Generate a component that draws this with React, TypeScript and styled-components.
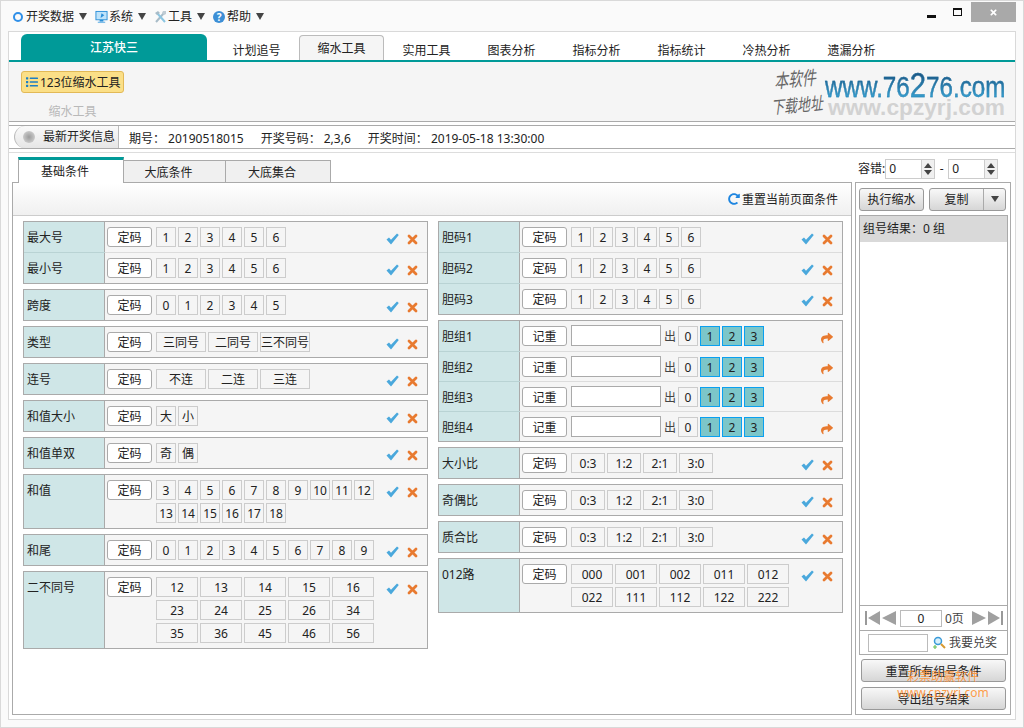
import React from 'react';
import styled, { createGlobalStyle } from 'styled-components';
import { FaTimes, FaShare, FaList, FaRedoAlt } from 'react-icons/fa';

const GlobalStyle = createGlobalStyle`
    html, body {
        margin: 0;
        padding: 0;
        background: #fff;
    }
    * {
        box-sizing: border-box;
    }
    body {
        font-family: "Noto Sans", "Noto Sans CJK SC", "Liberation Sans", sans-serif;
        font-size: 12px;
        color: #222;
    }
`;

const Window = styled.div`
    position: relative;
    width: 1024px;
    height: 728px;
    display: flex;
    flex-direction: column;
    background: #fafafa;
    border: 1px solid #d9d9d9;
    overflow: hidden;
`;

const TitleBar = styled.div`
    height: 30px;
    flex: none;
    display: flex;
    align-items: flex-start;
    justify-content: space-between;
`;

const Menu = styled.div`
    display: flex;
    align-items: center;
    height: 30px;
    padding: 1px 0 0 12px;
    gap: 8px;
`;

const MenuItem = styled.div`
    display: flex;
    align-items: center;
    gap: 1px;
    line-height: 16px;
    color: #222;
`;

const MenuArrow = styled.span`
    width: 0;
    height: 0;
    margin-left: 4px;
    border-left: 4px solid transparent;
    border-right: 4px solid transparent;
    border-top: 7px solid #444;
`;

const Ring = styled.span`
    width: 10px;
    height: 10px;
    margin-right: 2px;
    border-radius: 50%;
    border: 2px solid #2f8fe8;
`;

const HelpBadge = styled.span`
    width: 12px;
    height: 12px;
    margin-right: 1px;
    border-radius: 50%;
    background: #3d8fd6;
    color: #fff;
    font-size: 10px;
    line-height: 12px;
    font-weight: 700;
    text-align: center;
`;

const WindowControls = styled.div`
    display: flex;
    align-items: flex-start;
    padding-right: 7px;
`;

const MinButton = styled.span`
    width: 9px;
    height: 3px;
    margin: 14px 17px 0 0;
    background: #111;
`;

const MaxButton = styled.span`
    width: 9px;
    height: 8px;
    margin: 7px 9px 0 0;
    border: 1px solid #111;
    border-top-width: 2px;
`;

const CloseButton = styled.span`
    width: 45px;
    height: 20px;
    margin-top: 1px;
    background: #a9a9a9;
    display: flex;
    align-items: center;
    justify-content: center;
    color: #fff;
    font-size: 9px;
`;

const Shell = styled.div`
    flex: 1;
    margin: 0 7px 7px 7px;
    background: #fff;
    border: 1px solid #d9d9d9;
    display: flex;
    flex-direction: column;
    min-height: 0;
`;

const TabStrip = styled.div`
    height: 30px;
    flex: none;
    display: flex;
    align-items: flex-end;
    padding-left: 12px;
    border-bottom: 2px solid #009a98;
`;

const BrandTab = styled.div`
    width: 186px;
    height: 26px;
    margin-right: 7px;
    background: #009a98;
    border-radius: 6px 6px 0 0;
    color: #fff;
    font-weight: 500;
    text-align: center;
    line-height: 28px;
`;

const NavTab = styled.div<{ $active?: boolean }>`
    width: 85px;
    height: 25px;
    text-align: center;
    line-height: ${(p) => (p.$active ? '25px' : '29px')};
    background: ${(p) => (p.$active ? '#f5f5f5' : 'transparent')};
    border: ${(p) => (p.$active ? '1px solid #bbb' : '1px solid transparent')};
    border-bottom: 0;
    border-radius: 4px 4px 0 0;
`;

const Ribbon = styled.div`
    height: 60px;
    flex: none;
    display: flex;
    justify-content: space-between;
    padding: 9px 8px 0 12px;
    background: #f5f5f5;
    border-bottom: 1px solid #aaa;
`;

const RibbonGroup = styled.div`
    width: 103px;
    display: flex;
    flex-direction: column;
    align-items: center;
`;

const RibbonButton = styled.div`
    width: 103px;
    height: 23px;
    display: flex;
    align-items: center;
    gap: 2px;
    padding-left: 4px;
    background: #fbdf87;
    border: 1px solid #e2b957;
    border-radius: 3px;
    white-space: nowrap;
    svg {
        color: #1f7fc4;
    }
`;

const RibbonCaption = styled.div`
    margin-top: 10px;
    color: #b9b9b9;
    line-height: 18px;
`;

const Logo = styled.div`
    display: flex;
    align-items: flex-start;
    margin-top: -6px;
`;

const HandNote = styled.div`
    width: 54px;
    display: flex;
    flex-direction: column;
    color: #666;
    font-size: 14px;
    line-height: 27px;
    font-style: italic;
    white-space: nowrap;
    span {
        display: block;
        transform: scaleY(1.35) rotate(-4deg);
    }
    span:first-child {
        padding-left: 3px;
    }
    span:last-child {
        font-size: 13px;
    }
`;

const LogoText = styled.div`
    width: 182px;
    padding-top: 6px;
    font-family: "Liberation Sans", sans-serif;
    white-space: nowrap;
`;

const LogoMain = styled.div`
    width: 217px;
    font-size: 29px;
    line-height: 27px;
    transform: scaleX(0.835);
    transform-origin: left top;
    background: linear-gradient(#174f7c, #3aa9da);
    -webkit-background-clip: text;
    background-clip: text;
    color: transparent;
    -webkit-text-stroke: 0.3px rgba(30, 110, 160, 0.7);
    b {
        font-size: 35px;
        font-weight: 400;
    }
`;

const LogoSub = styled.div`
    margin: -3px 0 0 3px;
    font-size: 22.7px;
    line-height: 18px;
    font-weight: 700;
    color: #d2d2d2;
`;

const InfoBar = styled.div`
    height: 24px;
    flex: none;
    margin-top: 3px;
    display: flex;
    align-items: center;
    padding-left: 5px;
    border-top: 1px solid #aaa;
    border-bottom: 1px solid #aaa;
`;

const InfoLabel = styled.div`
    width: 105px;
    height: 22px;
    margin-right: 10px;
    display: flex;
    align-items: center;
    padding-left: 8px;
    gap: 8px;
    line-height: 24px;
    background: linear-gradient(#fafafa, #e6e6e6);
    border: 1px solid #bbb;
    border-width: 0 1px 0 1px;
    border-radius: 11px 0 0 11px;
    white-space: nowrap;
`;

const InfoDot = styled.span`
    width: 12px;
    height: 12px;
    flex: none;
    border-radius: 50%;
    background: radial-gradient(#9c9c9c, #c9c9c9 70%, #e8e8e8);
`;

const InfoValue = styled.span`
    margin-right: 17px;
    padding-top: 1px;
    white-space: pre;
`;

const Workspace = styled.div`
    flex: 1;
    margin-top: 3px;
    padding: 0 3px 4px 3px;
    border-top: 1px solid #ddd;
    display: flex;
    flex-direction: column;
    min-height: 0;
`;

const SubBar = styled.div`
    height: 29px;
    flex: none;
    display: flex;
    align-items: flex-end;
    padding-left: 6px;
    justify-content: space-between;
`;

const SubTabs = styled.div`
    display: flex;
    align-items: flex-end;
    position: relative;
    z-index: 1;
    margin-bottom: -1px;
`;

const SubTab = styled.div<{ $active?: boolean; $w: number }>`
    width: ${(p) => p.$w}px;
    height: ${(p) => (p.$active ? 26 : 23)}px;
    padding-right: 12px;
    text-align: center;
    line-height: 23px;
    background: ${(p) => (p.$active ? '#fff' : '#f0f0f0')};
    border: 1px solid #aaa;
    border-left-width: ${(p) => (p.$active ? 1 : 0)}px;
    border-top: ${(p) => (p.$active ? '3px solid #009a98' : '1px solid #aaa')};
    border-bottom: ${(p) => (p.$active ? '0' : '1px solid #aaa')};
`;

const Tolerance = styled.div`
    width: 156px;
    height: 22px;
    margin-bottom: 2px;
    display: flex;
    align-items: center;
    padding-left: 2px;
    line-height: 24px;
    white-space: nowrap;
`;

const Spinner = styled.div`
    width: 50px;
    height: 20px;
    display: flex;
    justify-content: space-between;
    padding-left: 3px;
    line-height: 18px;
    border: 1px solid #ccc;
    background: #fff;
`;

const SpinnerArrows = styled.div`
    width: 13px;
    height: 18px;
    display: flex;
    flex-direction: column;
    align-items: center;
    justify-content: space-around;
    padding: 2px 0;
    background: #f0f0f0;
    border-left: 1px solid #ccc;
`;

const SpinUp = styled.span`
    border-left: 4px solid transparent;
    border-right: 4px solid transparent;
    border-bottom: 5px solid #444;
`;

const SpinDown = styled.span`
    border-left: 4px solid transparent;
    border-right: 4px solid transparent;
    border-top: 5px solid #444;
`;

const SpinDash = styled.span`
    width: 13px;
    text-align: center;
`;

const Panels = styled.div`
    flex: 1;
    display: flex;
    gap: 3px;
    min-height: 0;
`;

const LeftPanel = styled.div`
    width: 840px;
    display: flex;
    flex-direction: column;
    border: 1px solid #aaa;
`;

const PanelToolbar = styled.div`
    height: 33px;
    flex: none;
    display: flex;
    align-items: center;
    justify-content: flex-end;
    gap: 2px;
    padding-right: 13px;
    background: linear-gradient(#fff, #f0f0f0);
    border-bottom: 1px solid #ccc;
    svg {
        color: #1f86e0;
    }
`;

const Columns = styled.div`
    display: flex;
    gap: 10px;
    padding: 5px 0 0 10px;
`;

const Column = styled.div`
    width: 405px;
    display: flex;
    flex-direction: column;
    gap: 5px;
`;

const Group = styled.div`
    border: 1px solid #aaa;
    background: #f5f5f5;
`;

const Row = styled.div`
    display: flex;
    & + & {
        border-top: 1px solid #dcdcdc;
    }
`;

const Label = styled.div`
    width: 81px;
    flex: none;
    padding: 2px 0 0 3px;
    line-height: 27px;
    background: #cfe6e7;
    border-right: 1px solid #aaa;
    ${Row} + ${Row} & {
        box-shadow: 0 -1px 0 #b9d3d4;
    }
`;

const RowBody = styled.div`
    flex: 1;
    display: flex;
    align-items: flex-start;
    gap: 4px;
    padding: 5px 0 5px 2px;
`;

const DanBody = styled(RowBody)`
    height: 29px;
    padding: 5px 0 0 2px;
    gap: 3px;
    ${Row}:first-child & {
        height: 30px;
    }
`;

const CodeButton = styled.div`
    width: 45px;
    height: 20px;
    flex: none;
    text-align: center;
    line-height: 20px;
    background: #fff;
    border: 1px solid #aaa;
    border-radius: 3px;
`;

const ChipGrid = styled.div<{ $cols: number; $w: number }>`
    display: grid;
    grid-template-columns: repeat(${(p) => p.$cols}, ${(p) => p.$w}px);
    gap: 3px 2px;
`;

const Chip = styled.div<{ $on?: boolean }>`
    height: 20px;
    text-align: center;
    line-height: 19px;
    white-space: nowrap;
    background: ${(p) => (p.$on ? '#7cc6c9' : '#f5f5f5')};
    border: 1px solid ${(p) => (p.$on ? '#0aa0f0' : '#ccc')};
`;

const Actions = styled.div`
    margin-left: auto;
    width: 41px;
    height: 20px;
    flex: none;
    display: flex;
    align-items: center;
    gap: 8px;
    padding-top: 4px;
`;

const ShareIcon = styled(FaShare)`
    width: 12px;
    height: 12px;
    margin-left: 20px;
    color: #e87a30;
`;

const DanInput = styled.div`
    width: 90px;
    height: 21px;
    flex: none;
    margin: -1px 0 0 1px;
    background: #fff;
    border: 1px solid #aaa;
`;

const DanGroup = styled.div`
    display: flex;
    gap: 2px;
`;

const DanChip = styled(Chip)`
    width: 20px;
`;

const DanOut = styled.span`
    color: #444;
    width: 11px;
    line-height: 21px;
    white-space: nowrap;
`;

const RightPanel = styled.div`
    width: 156px;
    display: flex;
    flex-direction: column;
    border: 1px solid #aaa;
    padding: 0 3px;
`;

const RunBar = styled.div`
    height: 32px;
    flex: none;
    display: flex;
    align-items: center;
    gap: 5px;
`;

const GrayButton = styled.div<{ $w: number }>`
    width: ${(p) => p.$w}px;
    height: 23px;
    flex: none;
    display: flex;
    align-items: center;
    justify-content: center;
    background: linear-gradient(#f8f8f8, #d6d6d6);
    border: 1px solid #999;
    border-radius: 3px;
`;

const SplitButton = styled(GrayButton)`
    justify-content: flex-start;
`;

const SplitText = styled.span`
    flex: 1;
    text-align: center;
`;

const SplitArrow = styled.span`
    width: 22px;
    height: 21px;
    display: flex;
    align-items: center;
    justify-content: center;
    border-left: 1px solid #aaa;
    &::after {
        content: "";
        border-left: 4px solid transparent;
        border-right: 4px solid transparent;
        border-top: 6px solid #444;
    }
`;

const ResultBox = styled.div`
    width: 149px;
    flex: 1;
    display: flex;
    flex-direction: column;
    border: 1px solid #aaa;
    border-bottom: 0;
    background: #fff;
    min-height: 0;
`;

const ResultHead = styled.div`
    height: 26px;
    flex: none;
    padding-left: 3px;
    line-height: 25px;
    background: #d9d9d9;
`;

const ResultList = styled.div`
    flex: 1;
`;

const Pager = styled.div`
    height: 25px;
    flex: none;
    display: flex;
    align-items: center;
    gap: 2px;
    padding-left: 5px;
    border-top: 1px solid #aaa;
    svg {
        flex: none;
    }
`;

const PagerInput = styled.div`
    width: 42px;
    height: 17px;
    margin-left: 2px;
    text-align: center;
    line-height: 15px;
    border: 1px solid #bbb;
    background: #fff;
`;

const PagerLabel = styled.span`
    width: 25px;
    margin-left: 1px;
    color: #444;
`;

const PrizeRow = styled.div`
    height: 25px;
    flex: none;
    display: flex;
    align-items: center;
    gap: 3px;
    padding-left: 8px;
    line-height: 27px;
    border-top: 1px solid #aaa;
    border-bottom: 1px solid #aaa;
    color: #444;
`;

const PrizeInput = styled.div`
    width: 60px;
    height: 18px;
    margin-right: 2px;
    background: #fff;
    border: 1px solid #bbb;
`;

const BottomButtons = styled.div`
    flex: none;
    display: flex;
    flex-direction: column;
    gap: 5px;
    padding: 4px 0 4px 2px;
`;

const Stamp = styled.div`
    position: absolute;
    left: 895px;
    top: 668px;
    width: 94px;
    text-align: center;
    line-height: 16px;
    color: rgba(255, 140, 40, 0.85);
    pointer-events: none;
    span {
        display: block;
        white-space: nowrap;
    }
`;

const CheckMark = () => (
    <svg width="13" height="12" viewBox="0 0 13 12">
        <path d="M0.5 6.5L3 4.5L5 6.8L11 0.5L12.8 2L5 11.5z" fill="#4aa8dc" />
    </svg>
);

const CrossMark = () => (
    <svg width="11" height="11" viewBox="0 0 11 11">
        <path d="M2 2L9 9M9 2L2 9" stroke="#e87a30" strokeWidth="2.8" strokeLinecap="round" />
    </svg>
);

const MonitorIcon = () => (
    <svg width="13" height="14" viewBox="0 0 14 14">
        <rect x="1" y="1" width="12" height="9" fill="#bfe3fa" stroke="#2a8fd8" />
        <path d="M7 3l3 2-4 3z" fill="#2a8fd8" />
        <rect x="5" y="10" width="4" height="2" fill="#2a8fd8" />
        <rect x="3" y="12" width="8" height="1.5" fill="#7fbde8" />
    </svg>
);

const ToolsIcon = () => (
    <svg width="13" height="13" viewBox="0 0 13 13">
        <path d="M2 12L10 3" stroke="#a8bcc8" strokeWidth="2" />
        <path d="M11 12L3 3" stroke="#8cc6e2" strokeWidth="2" />
        <path d="M1 3l3-2 2 2-3 2z" fill="#a8bcc8" />
        <path d="M9 1h3v3l-2 1-2-2z" fill="#c0ccd4" />
    </svg>
);

const SearchIcon = () => (
    <svg width="13" height="14" viewBox="0 0 13 14">
        <circle cx="5" cy="5" r="3.5" fill="#d8f0fb" stroke="#3a9ad8" strokeWidth="1.5" />
        <path d="M8 8l4 4" stroke="#d89a30" strokeWidth="2" />
        <path d="M0 11h4M2 9v4" stroke="#6ac05a" strokeWidth="1.2" />
    </svg>
);

const PagerIcon = ({ dir, bar }: { dir: 'left' | 'right'; bar?: boolean }) => (
    <svg width={bar ? 15 : 14} height="14" viewBox={bar ? '0 0 15 14' : '0 0 14 14'}>
        {dir === 'left' ? (
            <>
                {bar && <rect x="0" y="0" width="2" height="14" fill="#999" />}
                <path d={bar ? 'M15 0v14L3 7z' : 'M14 0v14L0 7z'} fill="#a0a0a0" />
            </>
        ) : (
            <>
                <path d={bar ? 'M0 0v14L12 7z' : 'M0 0v14L14 7z'} fill="#a0a0a0" />
                {bar && <rect x="13" y="0" width="2" height="14" fill="#999" />}
            </>
        )}
    </svg>
);

const nums = (list: string) => list.split(' ');

type RowData = { label: string; chips: string[]; cols: number; w: number };
const one = (label: string, list: string, w = 20, cols?: number): RowData => {
    const chips = nums(list);
    return { label, chips, w, cols: cols || chips.length };
};

const leftGroups: RowData[][] = [
    [one('最大号', '1 2 3 4 5 6'), one('最小号', '1 2 3 4 5 6')],
    [one('跨度', '0 1 2 3 4 5')],
    [one('类型', '三同号 二同号 三不同号', 50)],
    [one('连号', '不连 二连 三连', 50)],
    [one('和值大小', '大 小')],
    [one('和值单双', '奇 偶')],
    [one('和值', '3 4 5 6 7 8 9 10 11 12 13 14 15 16 17 18', 20, 10)],
    [one('和尾', '0 1 2 3 4 5 6 7 8 9')],
    [one('二不同号', '12 13 14 15 16 23 24 25 26 34 35 36 45 46 56', 42, 5)],
];

const rightTop: RowData[][] = [
    [
        one('胆码1', '1 2 3 4 5 6'),
        one('胆码2', '1 2 3 4 5 6'),
        one('胆码3', '1 2 3 4 5 6'),
    ],
];

const rightBottom: RowData[][] = [
    [one('大小比', '0:3 1:2 2:1 3:0', 34)],
    [one('奇偶比', '0:3 1:2 2:1 3:0', 34)],
    [one('质合比', '0:3 1:2 2:1 3:0', 34)],
    [one('012路', '000 001 002 011 012 022 111 112 122 222', 42, 5)],
];

const renderGroup = (rows: RowData[]) => (
    <Group key={rows[0].label}>
        {rows.map((r) => (
            <Row key={r.label}>
                <Label>{r.label}</Label>
                <RowBody>
                    <CodeButton>定码</CodeButton>
                    <ChipGrid $cols={r.cols} $w={r.w}>
                        {r.chips.map((c) => (
                            <Chip key={c}>{c}</Chip>
                        ))}
                    </ChipGrid>
                    <Actions>
                        <CheckMark />
                        <CrossMark />
                    </Actions>
                </RowBody>
            </Row>
        ))}
    </Group>
);

const App: React.FC = () => {
    return (
        <>
            <GlobalStyle />
            <Window>
                <TitleBar>
                    <Menu>
                        <MenuItem><Ring />开奖数据<MenuArrow /></MenuItem>
                        <MenuItem><MonitorIcon />系统<MenuArrow /></MenuItem>
                        <MenuItem><ToolsIcon />工具<MenuArrow /></MenuItem>
                        <MenuItem><HelpBadge>?</HelpBadge>帮助<MenuArrow /></MenuItem>
                    </Menu>
                    <WindowControls>
                        <MinButton />
                        <MaxButton />
                        <CloseButton><FaTimes /></CloseButton>
                    </WindowControls>
                </TitleBar>
                <Shell>
                    <TabStrip>
                        <BrandTab>江苏快三</BrandTab>
                        <NavTab>计划追号</NavTab>
                        <NavTab $active>缩水工具</NavTab>
                        <NavTab>实用工具</NavTab>
                        <NavTab>图表分析</NavTab>
                        <NavTab>指标分析</NavTab>
                        <NavTab>指标统计</NavTab>
                        <NavTab>冷热分析</NavTab>
                        <NavTab>遗漏分析</NavTab>
                    </TabStrip>
                    <Ribbon>
                        <RibbonGroup>
                            <RibbonButton><FaList size={12} />123位缩水工具</RibbonButton>
                            <RibbonCaption>缩水工具</RibbonCaption>
                        </RibbonGroup>
                        <Logo>
                            <HandNote>
                                <span>本软件</span>
                                <span>下载地址</span>
                            </HandNote>
                            <LogoText>
                                <LogoMain>www.76<b>2</b>76.com</LogoMain>
                                <LogoSub>www.cpzyrj.com</LogoSub>
                            </LogoText>
                        </Logo>
                    </Ribbon>
                    <InfoBar>
                        <InfoLabel><InfoDot />最新开奖信息</InfoLabel>
                        <InfoValue>期号： 20190518015</InfoValue>
                        <InfoValue>开奖号码： 2,3,6</InfoValue>
                        <InfoValue>开奖时间： 2019-05-18 13:30:00</InfoValue>
                    </InfoBar>
                    <Workspace>
                        <SubBar>
                            <SubTabs>
                                <SubTab $active $w={106}>基础条件</SubTab>
                                <SubTab $w={102}>大底条件</SubTab>
                                <SubTab $w={105}>大底集合</SubTab>
                            </SubTabs>
                            <Tolerance>
                                容错:
                                <Spinner>0<SpinnerArrows><SpinUp /><SpinDown /></SpinnerArrows></Spinner>
                                <SpinDash>-</SpinDash>
                                <Spinner>0<SpinnerArrows><SpinUp /><SpinDown /></SpinnerArrows></Spinner>
                            </Tolerance>
                        </SubBar>
                        <Panels>
                            <LeftPanel>
                                <PanelToolbar>
                                    <FaRedoAlt size={12} />重置当前页面条件
                                </PanelToolbar>
                                <Columns>
                                    <Column>{leftGroups.map(renderGroup)}</Column>
                                    <Column>
                                        {rightTop.map(renderGroup)}
                                        <Group>
                                            {['胆组1', '胆组2', '胆组3', '胆组4'].map((name) => (
                                                <Row key={name}>
                                                    <Label>{name}</Label>
                                                    <DanBody>
                                                        <CodeButton>记重</CodeButton>
                                                        <DanInput />
                                                        <DanOut>出</DanOut>
                                                        <DanGroup>
                                                            <DanChip>0</DanChip>
                                                            <DanChip $on>1</DanChip>
                                                            <DanChip $on>2</DanChip>
                                                            <DanChip $on>3</DanChip>
                                                        </DanGroup>
                                                        <Actions>
                                                            <ShareIcon />
                                                        </Actions>
                                                    </DanBody>
                                                </Row>
                                            ))}
                                        </Group>
                                        {rightBottom.map(renderGroup)}
                                    </Column>
                                </Columns>
                            </LeftPanel>
                            <RightPanel>
                                <RunBar>
                                    <GrayButton $w={65}>执行缩水</GrayButton>
                                    <SplitButton $w={77}>
                                        <SplitText>复制</SplitText>
                                        <SplitArrow />
                                    </SplitButton>
                                </RunBar>
                                <ResultBox>
                                    <ResultHead>组号结果：0 组</ResultHead>
                                    <ResultList />
                                    <Pager>
                                        <PagerIcon dir="left" bar />
                                        <PagerIcon dir="left" />
                                        <PagerInput>0</PagerInput>
                                        <PagerLabel>0页</PagerLabel>
                                        <PagerIcon dir="right" />
                                        <PagerIcon dir="right" bar />
                                    </Pager>
                                    <PrizeRow>
                                        <PrizeInput />
                                        <SearchIcon />
                                        我要兑奖
                                    </PrizeRow>
                                </ResultBox>
                                <BottomButtons>
                                    <GrayButton $w={145}>重置所有组号条件</GrayButton>
                                    <GrayButton $w={145}>导出组号结果</GrayButton>
                                </BottomButtons>
                            </RightPanel>
                        </Panels>
                    </Workspace>
                </Shell>
                <Stamp>
                    <span>彩票助赢软件</span>
                    <span>www.cpzyrj.com</span>
                </Stamp>
            </Window>
        </>
    );
};

export default App;
